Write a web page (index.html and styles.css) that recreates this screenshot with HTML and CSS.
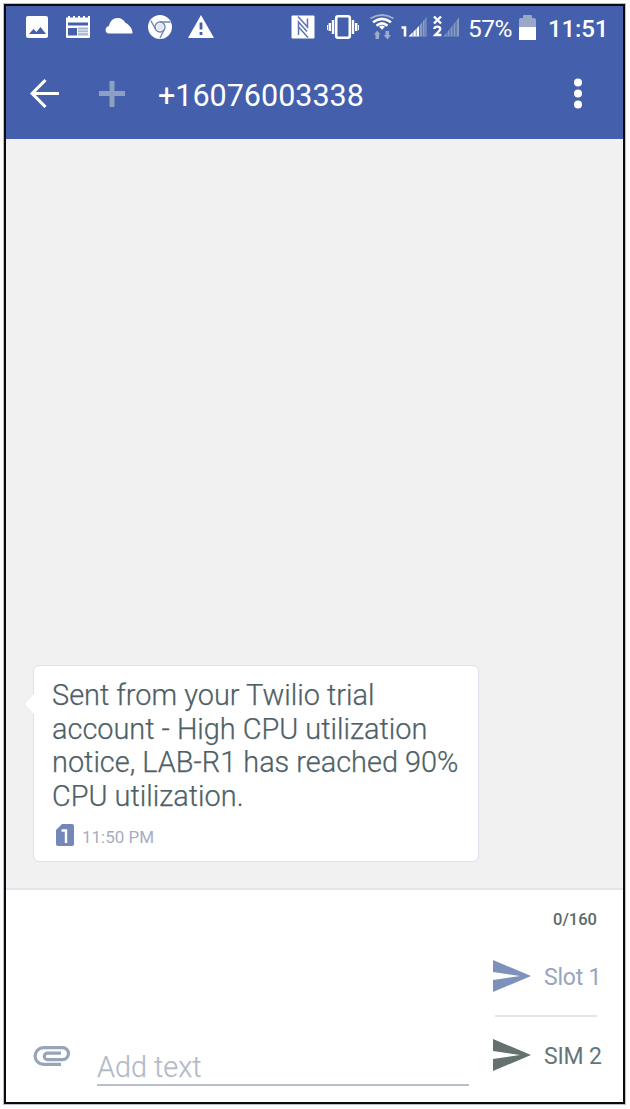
FILE: index.html
```html
<!DOCTYPE html>
<html lang="en">
<head>
<meta charset="utf-8">
<title>Messages</title>
<link rel="stylesheet" href="styles.css">
</head>
<body>
<main class="phone">
  <header class="top">
    <div class="status">
      <svg class="ico picture" viewBox="0 0 22 22"><path fill="#fff" fill-rule="evenodd" d="M2 0h18a2 2 0 0 1 2 2v18a2 2 0 0 1-2 2H2a2 2 0 0 1-2-2V2a2 2 0 0 1 2-2ZM3 18h17l-5.500-7-4 5-3-3Z"/></svg>
      <svg class="ico calendar" viewBox="0 0 26 24"><path fill="#fff" fill-rule="evenodd" d="M1 2.500h2V1h2v1.500h3V1h2v1.500h3V1h2v1.500h3V1h2v1.500h3V1h2v21a1 1 0 0 1-1 1H2a1 1 0 0 1-1-1ZM3 7.500h20v3H3ZM3 13h9v7.500H3Z"/><path fill="#a9b6d2" d="M13 12.500h10v8H13Z"/><path stroke="#fff" stroke-width=".8" d="M13 15h10M13 17.700h10"/></svg>
      <svg class="ico cloud" viewBox="0 0 28 16"><path fill="#fff" d="M4 15.500C-.5 15.500-.5 9 4 8 5 3 8 0 12.500 0c4 0 6.500 2 8 5 2 .5 7 4.500 7 10Q27.500 15.500 27 15.500Z"/></svg>
      <svg class="ico chrome" viewBox="0 0 24 24"><circle cx="12" cy="12" r="12" fill="#fff"/><g fill="none" stroke="#7086b5" stroke-width="1.400"><circle cx="12" cy="12" r="5"/><path d="M12 7h10.500M7.700 14.500 2.800 5.500M16.300 14.500 12 23"/></g><circle cx="12" cy="12" r="3.500" fill="#e2e7f1"/></svg>
      <svg class="ico warning" viewBox="0 0 26 23"><path fill="#fff" d="M13 0 26 23H0Z"/><path stroke="#445fab" stroke-width="2.800" d="M13 7.500v7M13 17v3"/></svg>
      <svg class="ico nfc" viewBox="0 0 24 24"><rect x=".5" y=".5" width="23" height="23" rx="1" fill="#fff"/><path fill="none" stroke="#5d75b3" stroke-width="1.500" d="M7.500 20V7L16 16.500M16.500 3.500v8.500L7 1.500M8 12.500 17 22.500"/></svg>
      <svg class="ico vibrate" viewBox="0 0 32 24"><rect x="9.200" y="1.200" width="13.600" height="21.600" rx="2" fill="none" stroke="#fff" stroke-width="2.600"/><path stroke="#fff" stroke-width="2.400" d="M6 5v14M26 5v14M2.800 8v8M29.200 8v8"/><path stroke="#fff" d="M.5 10v5M31.500 10v5"/></svg>
      <svg class="ico wifi" viewBox="0 0 24 26"><path fill="none" stroke="#a3b1ce" stroke-width="1.800" d="M.5 4.500Q12-2.500 23.500 4.500"/><path fill="none" stroke="#fff" stroke-width="2.600" d="M3 8.200Q12 1.500 21 8.200M6.500 11.800Q12 7 17.500 11.800"/><path fill="#fff" d="M9 12.800q3-2.500 6 0l-3 3Z"/><path fill="#9babc9" d="M4 20.500 7.200 16.500 10.500 20.500H9v4.500H5.500v-4.500ZM13.500 21H15.500v-4h3.500v4h2l-3.500 4.500Z"/></svg>
      <svg class="ico signal1" viewBox="0 0 26 22"><path fill="none" stroke="#fff" stroke-width="2.600" d="M.5 12.500h3.500V21.500"/><path fill="#fff" d="m7.500 21.500 11-11v11Z"/><path fill="#8c9fc3" d="M18.500 21.500v-11l7-8.500v19.500Z"/><path stroke="#445fab" stroke-width=".7" d="M12 14v7M15.200 11v10M18.500 8v13.500M21.500 5v16.500M24 3v18.500"/></svg>
      <svg class="ico signal2" viewBox="0 0 27 22"><path fill="none" stroke="#fff" stroke-width="2.400" d="m1 1.500 7 7M8 1.500 1 8.500M1.300 14c0-3.200 5.900-3.200 5.900 0 0 2-3 3.500-5 6h6.200"/><path fill="#889bc1" d="m10.500 21.500 15.500-19v19Z"/><path stroke="#445fab" stroke-width="1" d="M14 16v5.500M17 12v9.500M20 9v12.500M23 5v16.500"/></svg>
      <span class="percent">57%</span>
      <svg class="ico battery" viewBox="0 0 17 25"><path fill="#98a8c6" d="M0 12V5q0-2 2-2h2V1q0-1 1-1h7q1 0 1 1v2h2q2 0 2 2v7Z"/><path fill="#fff" d="M0 12h17v13H0Z"/></svg>
      <time class="clock">11:51</time>
    </div>
    <div class="appbar">
      <svg class="back" viewBox="0 0 30 30"><path fill="none" stroke="#fff" stroke-width="3.200" d="M29 14.500H3M15.500 1 2.200 14.500l13.300 13.500"/></svg>
      <svg class="plus" viewBox="0 0 26 26"><path stroke="#8d9fc2" stroke-width="5" d="M13 0v26M0 12.500h26"/></svg>
      <h1 class="number">+16076003338</h1>
      <svg class="more" viewBox="0 0 8 30"><g fill="#fff"><circle cx="4" cy="3.500" r="4"/><circle cx="4" cy="14.500" r="4"/><circle cx="4" cy="25.500" r="4"/></g></svg>
    </div>
  </header>
  <section class="thread">
    <article class="bubble">
      <svg class="tail" viewBox="0 0 12 24"><path fill="#fff" d="M12 0 0 12l12 12Z"/><path fill="none" stroke="#dfe2eb" d="M11 1 .7 12 11 23"/></svg>
      <p class="message">Sent from your Twilio trial<br>account - High CPU utilization<br>notice, LAB-R1 has reached 90%<br>CPU utilization.</p>
      <div class="meta">
        <svg class="sim" viewBox="0 0 18 22"><path fill="#7388b8" d="M6 0h10a2 2 0 0 1 2 2v18a2 2 0 0 1-2 2H2a2 2 0 0 1-2-2V6Z"/><path fill="none" stroke="#fff" stroke-width="2.400" d="M5.500 6.500H10V19"/></svg>
        <time>11:50 PM</time>
      </div>
    </article>
  </section>
  <footer class="composer">
    <svg class="clip" viewBox="0 0 36 20"><path fill="none" stroke="#98a5b9" stroke-width="3.200" d="M27 18.400H9.500a8.300 8.300 0 0 1 0-16.800h19a6 6 0 0 1 0 12H13.500a3.200 3.200 0 0 1 0-6.400H27"/></svg>
    <div class="entry"><span>Add text</span></div>
    <div class="send">
      <span class="count">0/160</span>
      <div class="slot one"><svg viewBox="0 0 38 32"><path fill="#7e91bb" d="M0 0 38 16 0 32V20l27-4L0 12Z"/></svg><span>Slot 1</span></div>
      <div class="rule"></div>
      <div class="slot two"><svg viewBox="0 0 38 32"><path fill="#64716f" d="M0 0 38 16 0 32V20l27-4L0 12Z"/></svg><span>SIM 2</span></div>
    </div>
  </footer>
</main>
</body>
</html>
```
FILE: styles.css
```css
* { box-sizing: border-box; }
body { margin: 0; padding: 4px; background: #fdfdfd; font-family: Roboto, sans-serif; }
svg { display: block; flex: none; overflow: visible; }
.phone { width: 621px; height: 1100px; border: 2px solid #080a10; box-shadow: 0 0 0 1px #b9bfcb; display: flex; flex-direction: column; background: #fff; }
.top { height: 133px; background: #445fab; color: #fff; flex: none; }
.status { height: 46px; display: flex; align-items: flex-start; padding-left: 20px; white-space: nowrap; }
.picture { width: 22px; height: 22px; margin-top: 10px; }
.calendar { width: 26px; height: 24px; margin: 9px 0 0 17px; }
.cloud { width: 28px; height: 16px; margin: 12px 0 0 14px; }
.chrome { width: 24px; height: 24px; margin: 9px 0 0 15px; }
.warning { width: 26px; height: 23px; margin: 9px 0 0 16px; }
.nfc { width: 24px; height: 24px; margin: 9px 0 0 77px; }
.vibrate { width: 32px; height: 24px; margin: 9px 0 0 12px; }
.wifi { width: 24px; height: 26px; margin: 8px 0 0 11px; }
.signal1 { width: 26px; height: 22px; margin: 9px 0 0 7px; }
.signal2 { width: 27px; height: 22px; margin: 9px 0 0 6px; }
.percent { width: 50px; margin-left: 8px; padding-top: 8px; font-size: 24.500px; line-height: 29px; letter-spacing: -.5px; }
.battery { width: 17px; height: 25px; margin: 9px 0 0 1px; }
.clock { margin-left: 12px; padding-top: 9px; font-size: 24px; font-weight: 500; line-height: 29px; letter-spacing: -.1px; }
.appbar { height: 87px; display: flex; align-items: center; padding: 0 41px 4px 24px; }
.back { width: 30px; height: 30px; }
.plus { width: 26px; height: 26px; margin-left: 39px; }
.number { margin: 4px 0 0 33px; font-size: 30.500px; line-height: 36px; font-weight: 400; }
.more { width: 8px; height: 30px; margin-left: auto; }
.thread { height: 751px; flex: none; background: #f1f1f1; border-bottom: 2px solid #e4e5ea; display: flex; align-items: flex-end; padding: 0 0 26px 27px; }
.bubble { position: relative; width: 446px; height: 197px; border: 1px solid #dce1eb; border-radius: 6px; background: #fff; padding: 13px 0 0 18px; }
.tail { position: absolute; left: -11px; top: 26px; width: 12px; height: 24px; }
.message { margin: 0; font-size: 28.900px; line-height: 33.700px; font-weight: 300; color: #4e6066; -webkit-text-stroke: .25px #4e6066; white-space: nowrap; }
.meta { display: flex; align-items: center; gap: 8px; margin-top: 9px; padding-left: 4px; font-size: 17px; line-height: 22px; color: #a6adbf; }
.sim { width: 18px; height: 22px; }
.meta time { padding-top: 3px; }
.composer { flex: 1; display: flex; }
.clip { width: 36px; height: 20px; margin: 156px 0 0 28px; }
.entry { width: 372px; height: 196px; margin-left: 27px; border-bottom: 2px solid #b7bdca; display: flex; align-items: flex-end; font-size: 28.800px; font-weight: 300; line-height: 33px; color: #b2bac9; -webkit-text-stroke: .25px #b2bac9; }
.send { width: 111px; margin-left: 24px; }
.count { display: block; margin: 19px 7px 0 0; text-align: right; font-size: 16.500px; line-height: 22px; font-weight: 500; color: #5b6968; }
.slot { display: flex; align-items: center; gap: 13px; height: 32px; font-size: 23px; line-height: 28px; letter-spacing: -.2px; white-space: nowrap; }
.slot svg { width: 38px; height: 32px; }
.slot span { padding-top: 4px; }
.one { margin-top: 29px; color: #98a5bd; }
.two { color: #64757a; }
.rule { width: 102px; height: 2px; background: #e4e5e8; margin: 23px 0 22px 2px; }
```
